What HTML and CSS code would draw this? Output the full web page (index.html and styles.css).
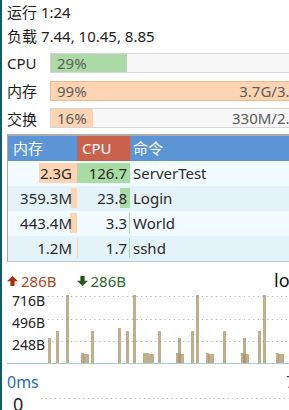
FILE: index.html
```html
<!DOCTYPE html>
<html lang="zh-CN">
<head>
    <meta charset="UTF-8">
    <meta name="viewport" content="width=device-width, initial-scale=1.0">
    <title>服务器状态</title>
    <link rel="stylesheet" href="styles.css">
</head>
<body>
    <div class="panel">
        <div class="line">运行 1:24</div>
        <div class="line">负载 7.44, 10.45, 8.85</div>

        <div class="meters">
            <div class="meter">
                <span class="meter-label">CPU</span>
                <div class="bar">
                    <div class="fill fill-cpu" style="width: 29%"></div>
                    <span class="bar-text">29%</span>
                </div>
            </div>
            <div class="meter">
                <span class="meter-label">内存</span>
                <div class="bar bar-full">
                    <div class="fill fill-mem" style="width: 100%"></div>
                    <span class="bar-text">99%</span>
                    <span class="bar-value">3.7G/3.8G</span>
                </div>
            </div>
            <div class="meter">
                <span class="meter-label">交换</span>
                <div class="bar">
                    <div class="fill fill-mem" style="width: 16%"></div>
                    <span class="bar-text">16%</span>
                    <span class="bar-value">330M/2.0G</span>
                </div>
            </div>
        </div>

        <div class="procs">
            <div class="proc-head">
                <span class="head-mem">内存</span>
                <span class="head-cpu">CPU</span>
                <span class="head-cmd">命令</span>
            </div>
            <div class="proc-row">
                <div class="cell cell-mem"><i style="width: 38px"></i><span>2.3G</span></div>
                <div class="cell cell-cpu"><i style="width: 53px"></i><span>126.7</span></div>
                <div class="cell cell-cmd">ServerTest</div>
            </div>
            <div class="proc-row">
                <div class="cell cell-mem"><i style="width: 6px"></i><span>359.3M</span></div>
                <div class="cell cell-cpu"><i style="width: 10px"></i><span>23.8</span></div>
                <div class="cell cell-cmd">Login</div>
            </div>
            <div class="proc-row">
                <div class="cell cell-mem"><i style="width: 7px"></i><span>443.4M</span></div>
                <div class="cell cell-cpu"><i style="width: 1.4px"></i><span>3.3</span></div>
                <div class="cell cell-cmd">World</div>
            </div>
            <div class="proc-row">
                <div class="cell cell-mem"><i style="width: 0.5px"></i><span>1.2M</span></div>
                <div class="cell cell-cpu"><i style="width: 0.7px"></i><span>1.7</span></div>
                <div class="cell cell-cmd">sshd</div>
            </div>
        </div>

        <div class="net-head">
            <div class="rates">
                <span class="rate rate-up">
                    <svg width="11" height="10" viewBox="0 0 11 10"><path d="M5.5 0 L11 5.2 L7.6 5.2 L7.6 10 L3.4 10 L3.4 5.2 L0 5.2 Z" fill="#a3300c"/></svg>286B
                </span>
                <span class="rate rate-down">
                    <svg width="11" height="10" viewBox="0 0 11 10"><path d="M5.5 10 L11 4.8 L7.6 4.8 L7.6 0 L3.4 0 L3.4 4.8 L0 4.8 Z" fill="#24561c"/></svg>286B
                </span>
            </div>
            <span class="net-name">lo</span>
        </div>

        <div class="chart">
            <div class="axis">
                <span>716B</span>
                <span>496B</span>
                <span>248B</span>
            </div>
            <svg class="plot" width="282" height="73" viewBox="0 0 282 73">
                <g stroke="#b4b4b4" stroke-width="1" stroke-dasharray="1.2 3.47">
                    <line x1="36" y1="6.5" x2="282" y2="6.5"/>
                    <line x1="36" y1="29.5" x2="282" y2="29.5"/>
                    <line x1="36" y1="51.5" x2="282" y2="51.5"/>
                </g>
                <g fill="rgba(165,145,95,0.72)">
                    <rect x="41" y="48" width="3" height="25"/>
                    <rect x="49" y="41" width="3" height="32"/>
                    <rect x="59" y="5" width="3" height="68"/>
                    <rect x="74" y="63" width="3" height="10"/>
                    <rect x="76" y="64" width="6" height="9"/>
                    <rect x="84" y="41" width="3" height="32"/>
                    <rect x="111" y="38" width="3" height="35"/>
                    <rect x="119" y="41" width="3" height="32"/>
                    <rect x="126" y="5" width="3" height="68"/>
                    <rect x="136" y="63" width="6" height="10"/>
                    <rect x="142" y="64" width="5" height="9"/>
                    <rect x="151" y="41" width="3" height="32"/>
                    <rect x="169" y="63" width="3" height="10"/>
                    <rect x="171" y="48" width="3" height="25"/>
                    <rect x="172" y="64" width="5" height="9"/>
                    <rect x="184" y="41" width="3" height="32"/>
                    <rect x="189" y="5" width="3" height="68"/>
                    <rect x="199" y="63" width="3" height="10"/>
                    <rect x="201" y="64" width="6" height="9"/>
                    <rect x="216" y="41" width="3" height="32"/>
                    <rect x="234" y="63" width="3" height="10"/>
                    <rect x="236" y="48" width="3" height="25"/>
                    <rect x="237" y="64" width="5" height="9"/>
                    <rect x="251" y="41" width="3" height="32"/>
                    <rect x="256" y="5" width="3" height="68"/>
                    <rect x="269" y="63" width="3" height="10"/>
                    <rect x="271" y="64" width="6" height="9"/>
                </g>
            </svg>
        </div>

        <div class="ping-head">
            <span class="ping-title">0ms</span>
            <span class="ping-side">7ms</span>
        </div>
        <div class="ping-chart">
            <span class="ping-axis">0</span>
            <svg class="ping-grid" width="248" height="4" viewBox="0 0 248 4">
                <line x1="0" y1="1.5" x2="248" y2="1.5" stroke="#b4b4b4" stroke-width="1" stroke-dasharray="1.2 3.47"/>
            </svg>
        </div>
    </div>
</body>
</html>
```

FILE: styles.css
```css
html, body {
    margin: 0;
    overflow: hidden;
}

body {
    font-family: "Noto Sans", "Noto Sans CJK SC", sans-serif;
    font-size: 15px;
    color: #1e1e1e;
    background-color: #ffffff;
    height: 410px;
}

.panel {
    width: 320px;
    height: 410px;
    border-left: 2px solid #1c5864;
    padding-left: 5px;
    box-sizing: border-box;
}

.line {
    height: 24px;
    line-height: 24px;
}

/* usage meters */
.meters {
    display: flex;
    flex-direction: column;
    gap: 7.5px;
    margin-top: 5px;
}

.meter {
    display: flex;
    align-items: center;
    height: 20px;
}

.meter-label {
    width: 43px;
    flex: none;
}

.bar {
    display: grid;
    width: 264px;
    height: 20px;
    border: 1px solid #d6d6d6;
    background-color: #f7f7f7;
    box-sizing: border-box;
    line-height: 18px;
    color: #5c5c5c;
}

.bar > * {
    grid-area: 1 / 1;
}

.bar-full {
    border-color: #f0b98c;
}

.fill {
    height: 100%;
    justify-self: start;
}

.fill-cpu {
    background-color: #abdaa6;
}

.fill-mem {
    background-color: #fcd4b2;
}

.bar-text {
    justify-self: start;
    padding-left: 6px;
}

.bar-value {
    justify-self: end;
    padding-right: 4px;
}

/* process table */
.procs {
    margin-top: 6px;
    width: 313px;
    border-top: 2px solid #ababab;
    border-left: 1px solid #a6a6a6;
    border-bottom: 1px solid #b3cde0;
}

.proc-head,
.proc-row {
    display: grid;
    grid-template-columns: 69px 53px 1fr;
    height: 25px;
    line-height: 25px;
}

.proc-head {
    background-color: #5b95d5;
    color: #ffffff;
}

.head-mem,
.head-cpu {
    padding-left: 5px;
}

.head-cpu {
    background-color: #c9614d;
}

.head-cmd {
    padding-left: 3px;
}

.proc-row {
    background-color: #f2fbff;
    color: #2a2a2a;
}

.proc-row:nth-child(odd) {
    background-color: #e4f3f9;
}

.cell {
    display: grid;
}

.cell > * {
    grid-area: 1 / 1;
}

.cell i {
    justify-self: end;
    height: 20px;
    margin-top: 2px;
}

.cell span {
    justify-self: end;
    padding-right: 3px;
}

.cell-mem i {
    background-color: #fcd4b2;
}

.cell-cpu i {
    background-color: #a9dba5;
}

.cell-mem span {
    padding-right: 5px;
}

.cell-cmd {
    padding-left: 3px;
}

/* network */
.net-head {
    display: grid;
    grid-template-columns: 267px auto;
    margin-top: 10px;
    height: 18px;
    line-height: 18px;
}

.rates {
    display: flex;
    gap: 20px;
}

.rate {
    display: flex;
    align-items: center;
    gap: 3px;
}

.rate-up {
    color: #b3461f;
}

.rate-down {
    color: #2b6a2b;
}

.net-name {
    font-size: 18px;
    color: #111111;
    line-height: 16px;
}

.chart {
    display: grid;
    height: 73px;
    border-bottom: 1px solid #a9cad6;
}

.chart > * {
    grid-area: 1 / 1;
}

.axis {
    display: flex;
    flex-direction: column;
    width: 38px;
    text-align: right;
    font-size: 14px;
    line-height: 22px;
    color: #222222;
}

.plot {
    display: block;
}

/* latency */
.ping-head {
    display: grid;
    grid-template-columns: 279px auto;
    margin-top: 8px;
    height: 20px;
    line-height: 20px;
    font-size: 16px;
}

.ping-title {
    color: #2b6db3;
}

.ping-side {
    color: #2a3f8f;
}

.ping-chart {
    display: flex;
    align-items: flex-start;
    margin-top: 1px;
}

.ping-axis {
    width: 34px;
    padding-left: 6px;
    box-sizing: border-box;
    font-size: 18px;
    line-height: 22px;
}

.ping-grid {
    display: block;
    margin-top: 4px;
}
```
